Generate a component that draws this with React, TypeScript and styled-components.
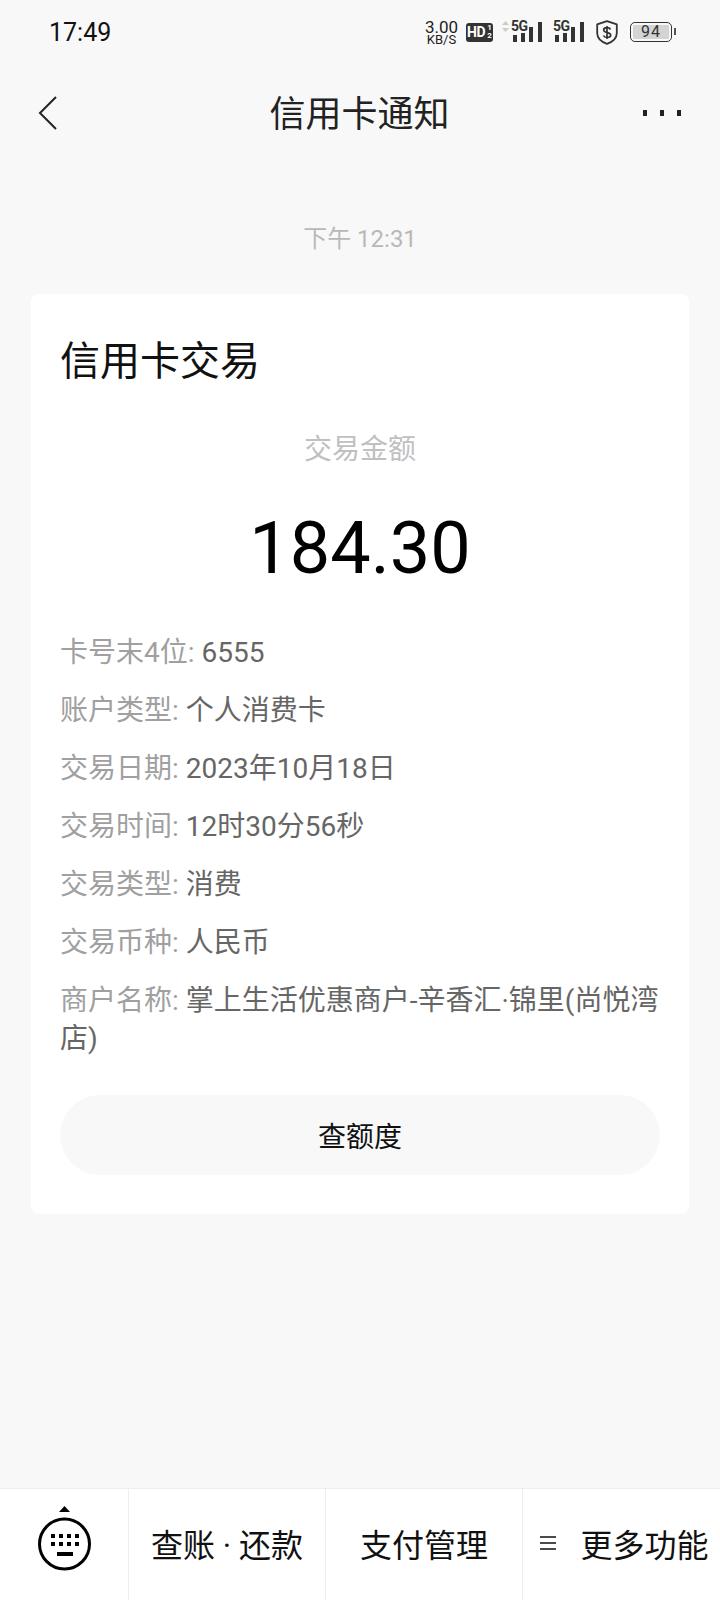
import React from 'react';
import styled, { createGlobalStyle } from 'styled-components';

const GlobalStyle = createGlobalStyle`
  html, body {
    margin: 0;
    padding: 0;
    background: #f8f8f8;
  }
  * {
    box-sizing: border-box;
  }
`;

const Page = styled.div`
  width: 720px;
  height: 1600px;
  display: flex;
  flex-direction: column;
  overflow: hidden;
  background: #f8f8f8;
  font-family: Roboto, "Noto Sans CJK SC", sans-serif;
  color: #000;
`;

const StatusBar = styled.div`
  height: 64px;
  padding: 0 48px 0 49px;
  display: flex;
  align-items: center;
  justify-content: space-between;
`;

const Clock = styled.span`
  font-size: 25px;
  line-height: 30px;
  margin-top: 1px;
  color: #111;
`;

const StatusIcons = styled.div`
  display: flex;
  align-items: center;
`;

const NetSpeed = styled.div`
  width: 33px;
  margin-top: 1px;
  display: flex;
  flex-direction: column;
  align-items: center;
  font-size: 17px;
  line-height: 13px;
  color: #222;
`;

const NetUnit = styled.span`
  font-size: 13px;
  line-height: 11px;
`;

const HdBadge = styled.div`
  width: 27px;
  height: 19px;
  margin-left: 8px;
  padding-left: 1px;
  border-radius: 3px;
  background: #333;
  color: #fff;
  display: flex;
  align-items: center;
  font-size: 14px;
  font-weight: 700;
  letter-spacing: -0.5px;
`;

const HdFraction = styled.span`
  display: flex;
  flex-direction: column;
  align-items: center;
  width: 7px;
  margin-left: 1px;
  font-size: 8px;
  line-height: 8px;
  letter-spacing: 0;
`;

const Signal = styled.div<{ $gap: number; $arrows?: boolean }>`
  position: relative;
  width: ${(p) => (p.$arrows ? 40 : 31)}px;
  height: 24px;
  margin-left: ${(p) => p.$gap}px;
  display: flex;
  justify-content: flex-end;
`;

const SignalLabel = styled.span<{ $left: number }>`
  position: absolute;
  top: -1px;
  left: ${(p) => p.$left}px;
  font-size: 14px;
  line-height: 15px;
  font-weight: 700;
  letter-spacing: -0.5px;
  color: #333;
`;

const ArrowIcon = styled.svg`
  position: absolute;
  left: 0;
  top: 1px;
`;

const ShieldWrap = styled.div`
  margin-left: 12px;
  display: flex;
`;

const Battery = styled.div`
  position: relative;
  width: 42px;
  height: 20px;
  margin-left: 12px;
  border: 1.5px solid #333;
  border-radius: 5px;
  padding: 2px;
`;

const BatteryLevel = styled.div`
  height: 100%;
  border-radius: 1px;
  background: #d4d4d4;
  color: #333;
  font-size: 16px;
  line-height: 14px;
  text-align: center;
  letter-spacing: 1px;
`;

const BatteryTip = styled.div`
  position: absolute;
  right: -5px;
  top: 5px;
  width: 2px;
  height: 7px;
  background: #555;
`;

const NavBar = styled.header`
  height: 98px;
  padding: 0 39px 0 38px;
  display: grid;
  grid-template-columns: 1fr auto 1fr;
  align-items: center;
`;

const NavTitle = styled.h1`
  margin: 3px 0 0;
  font-size: 36px;
  line-height: 50px;
  font-weight: 400;
  color: #222;
`;

const NavMore = styled.svg`
  justify-self: end;
`;

const TimeStamp = styled.div`
  margin-top: 57px;
  height: 40px;
  line-height: 40px;
  text-align: center;
  font-size: 24px;
  color: #b8b8b8;
`;

const Card = styled.section`
  margin: 35px 31px 0;
  height: 920px;
  padding: 41px 29px 0;
  border-radius: 8px;
  background: #fff;
`;

const CardTitle = styled.h2`
  margin: 0;
  font-size: 40px;
  line-height: 54px;
  font-weight: 400;
  color: #111;
`;

const AmountLabel = styled.div`
  margin-top: 41px;
  text-align: center;
  font-size: 28px;
  line-height: 40px;
  color: #c0c0c0;
`;

const Amount = styled.div`
  margin-top: 33px;
  text-align: center;
  font-size: 72px;
  line-height: 92px;
  color: #000;
`;

const Details = styled.dl`
  margin: 39px 0 0;
  display: flex;
  flex-direction: column;
  gap: 20px;
`;

const DetailRow = styled.div`
  font-size: 28px;
  line-height: 38px;
  color: #666;
`;

const DetailLabel = styled.span`
  color: #a0a0a0;
`;

const QuotaButton = styled.button`
  display: block;
  width: 100%;
  height: 80px;
  margin-top: 37px;
  border: none;
  border-radius: 40px;
  background: #f8f8f8;
  font-family: inherit;
  font-size: 28px;
  color: #111;
`;

const BottomBar = styled.nav`
  margin-top: auto;
  height: 112px;
  display: flex;
  background: #fff;
  border-top: 1px solid #eeeeee;
`;

const KeyboardTab = styled.div`
  width: 128px;
  flex-shrink: 0;
  display: flex;
  justify-content: center;
  padding-top: 17px;
`;

const Tab = styled.div<{ $width: number; $shift?: number }>`
  width: ${(p) => p.$width}px;
  flex-shrink: 0;
  display: flex;
  align-items: center;
  justify-content: center;
  gap: 24px;
  padding: 0 0 4px ${(p) => p.$shift ?? 0}px;
  border-left: 1px solid #eeeeee;
  font-size: 32px;
  color: #111;
`;

const MenuGlyph = styled.svg`
  flex-shrink: 0;
`;

const details: [string, string][] = [
  ['卡号末4位:', '6555'],
  ['账户类型:', '个人消费卡'],
  ['交易日期:', '2023年10月18日'],
  ['交易时间:', '12时30分56秒'],
  ['交易类型:', '消费'],
  ['交易币种:', '人民币'],
  ['商户名称:', '掌上生活优惠商户-辛香汇·锦里(尚悦湾店)'],
];

const SignalBars = () => (
  <svg width="29" height="24" viewBox="0 0 29 24">
    <rect x="0" y="15" width="4" height="7" fill="#333" />
    <rect x="8" y="13" width="4" height="9" fill="#333" />
    <rect x="16" y="7" width="4" height="15" fill="#333" />
    <rect x="25" y="2" width="4" height="20" fill="#333" />
  </svg>
);

const App = () => (
  <Page>
    <GlobalStyle />
    <StatusBar>
      <Clock>17:49</Clock>
      <StatusIcons>
        <NetSpeed>
          3.00
          <NetUnit>KB/S</NetUnit>
        </NetSpeed>
        <HdBadge>
          HD
          <HdFraction>
            <span>1</span>
            <span>2</span>
          </HdFraction>
        </HdBadge>
        <Signal $gap={9} $arrows>
          <ArrowIcon width="7" height="11" viewBox="0 0 7 11">
            <path d="M3.5 0 7 4H0zM0 7h7l-3.500 4z" fill="#ccc" />
          </ArrowIcon>
          <SignalLabel $left={9}>5G</SignalLabel>
          <SignalBars />
        </Signal>
        <Signal $gap={11}>
          <SignalLabel $left={0}>5G</SignalLabel>
          <SignalBars />
        </Signal>
        <ShieldWrap>
          <svg width="22" height="25" viewBox="0 0 22 25">
            <path
              d="M11 1.200 20.800 4.400V13c0 5-4 8.800-9.800 10.800C5.200 21.800 1.200 18 1.200 13V4.400z"
              fill="none"
              stroke="#333"
              strokeWidth="1.800"
              strokeLinejoin="round"
            />
            <path
              d="M14.500 9.500c-.6-1.200-1.900-1.800-3.500-1.800-1.900 0-3.300 1-3.300 2.400 0 3.300 7 1.700 7 5 0 1.400-1.500 2.400-3.600 2.400-1.700 0-3.100-.7-3.700-2M11 6v13"
              fill="none"
              stroke="#333"
              strokeWidth="1.700"
            />
          </svg>
        </ShieldWrap>
        <Battery>
          <BatteryLevel>94</BatteryLevel>
          <BatteryTip />
        </Battery>
      </StatusIcons>
    </StatusBar>

    <NavBar>
      <svg width="19" height="34" viewBox="0 0 19 34">
        <path d="M18 1 2 17l16 16" fill="none" stroke="#222" strokeWidth="2" />
      </svg>
      <NavTitle>信用卡通知</NavTitle>
      <NavMore width="38" height="6" viewBox="0 0 38 6">
        <rect x="0" y="0" width="4" height="6" fill="#222" />
        <rect x="17" y="0" width="4" height="6" fill="#222" />
        <rect x="34" y="0" width="4" height="6" fill="#222" />
      </NavMore>
    </NavBar>

    <TimeStamp>下午 12:31</TimeStamp>

    <Card>
      <CardTitle>信用卡交易</CardTitle>
      <AmountLabel>交易金额</AmountLabel>
      <Amount>184.30</Amount>
      <Details>
        {details.map(([label, value]) => (
          <DetailRow key={label}>
            <DetailLabel>{label}</DetailLabel> {value}
          </DetailRow>
        ))}
      </Details>
      <QuotaButton>查额度</QuotaButton>
    </Card>

    <BottomBar>
      <KeyboardTab>
        <svg width="56" height="72" viewBox="0 0 56 72">
          <path d="M28.500 0l5.500 6H23z" fill="#000" />
          <circle cx="28.500" cy="38" r="25" fill="none" stroke="#000" strokeWidth="3" />
          {[15, 23, 31, 39].map((x) => (
            <React.Fragment key={x}>
              <rect x={x} y="28" width="4" height="4" fill="#000" />
              <rect x={x} y="36" width="4" height="4" fill="#000" />
            </React.Fragment>
          ))}
          <rect x="21" y="46" width="16" height="4" fill="#000" />
        </svg>
      </KeyboardTab>
      <Tab $width={197}>查账 · 还款</Tab>
      <Tab $width={197}>支付管理</Tab>
      <Tab $width={198} $shift={6}>
        <MenuGlyph width="16" height="16" viewBox="0 0 16 16">
          <path d="M0 2h16M0 8h16M0 14h16" stroke="#111" strokeWidth="1.500" />
        </MenuGlyph>
        更多功能
      </Tab>
    </BottomBar>
  </Page>
);

export default App;
